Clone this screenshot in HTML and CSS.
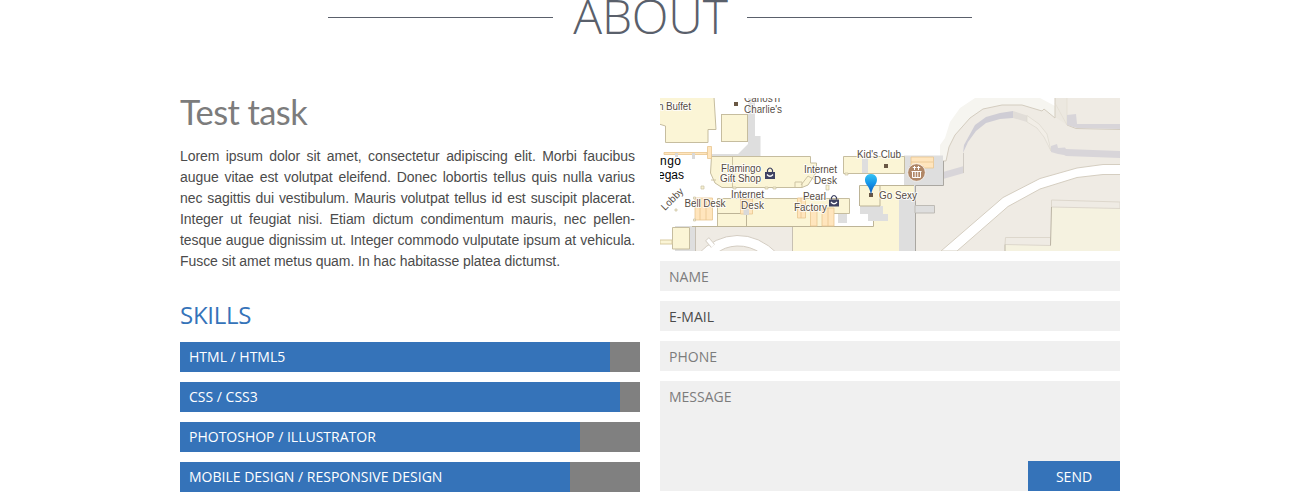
FILE: index.html
```html
<!DOCTYPE html>
<html lang="en">
<head>
<meta charset="utf-8">
<title>About</title>
<link rel="stylesheet" href="styles.css">
</head>
<body>
<section class="about">
  <header class="about-head"><span class="rule"></span><h1 class="title">ABOUT</h1><span class="rule"></span></header>
  <div class="columns">
    <div class="col">
      <h2 class="task">Test task</h2>
      <p class="copy">Lorem ipsum dolor sit amet, consectetur adipiscing elit. Morbi faucibus augue vitae est volutpat eleifend. Donec lobortis tellus quis nulla varius nec sagittis dui vestibulum. Mauris volutpat tellus id est suscipit placerat. Integer ut feugiat nisi. Etiam dictum condimentum mauris, nec pellen&shy;tesque augue dignissim ut. Integer commodo vulputate ipsum at vehicula. Fusce sit amet metus quam. In hac habitasse platea dictumst.</p>
      <h3 class="skills-title">SKILLS</h3>
      <ul class="skills">
        <li class="skill"><div class="fill" style="width:430px">HTML / HTML5</div></li>
        <li class="skill"><div class="fill" style="width:440px">CSS / CSS3</div></li>
        <li class="skill"><div class="fill" style="width:400px">PHOTOSHOP / ILLUSTRATOR</div></li>
        <li class="skill"><div class="fill" style="width:390px">MOBILE DESIGN / RESPONSIVE DESIGN</div></li>
      </ul>
    </div>
    <div class="col">
      <svg class="map" viewBox="660 98 460 153" width="460" height="153">
        <defs><linearGradient id="pin" x1="0" y1="0" x2="0" y2="1"><stop offset="0" stop-color="#35c3f4"/><stop offset=".45" stop-color="#1495e8"/><stop offset="1" stop-color="#0c50b8"/></linearGradient></defs>
        <rect x="660" y="98" width="460" height="153" fill="#fff"/>
        <!-- east grounds -->
        <path d="M940 160V145L945 138 950 122 960 108 975 98H1040L1055 106 1067 125 1055 130 943 165Z" fill="#f6f5f0"/>
        <path d="M915 185H943V160H946L949 147 955 135 970 118 983 109 1002 105H1022L1042 111 1044 109 1055 118V98H1120V251H915Z" fill="#efebe4"/>
        <path d="M1055 98H1067V125L1055 117Z" fill="#ece8e0"/>
        <path d="M943 161H946L949 147 955 135 970 118 983 109 1002 105H1022L1042 111 1044 109 1055 118V98M1067 125L1076 128.500 1120 129.500" fill="none" stroke="#d4cdc0"/>
        <path d="M1055 103L1067 125V98" fill="none" stroke="#e0dacf" stroke-width=".6"/>
        <path d="M963 153L964 145 975 125 986 117 1000 113 1013 111V118L1000 119 986 123 976 131 968 142Z" fill="#cfcdd5"/>
        <path d="M1013 111L1027 115.500V122L1013 118Z" fill="#e1ddd8"/>
        <path d="M1027 115.500L1039 124 1047 134 1051 151 1044 137 1037 128 1027 122Z" fill="#f2eee7" stroke="#dcd8cf" stroke-width=".7"/>
        <path d="M943 172L964 166V173L943 179ZM1067 115L1076 114 1077 124 1120 124V129L1077 128 1067 125ZM1051 146L1057 144 1058 148 1065 147.500 1066 149 1120 151V158L1066 156 1064 155 1058 154 1051 152Z" fill="#d8d5d9"/>
        <path d="M943 185V162M963.500 153V173" stroke="#d0cbc4" fill="none"/>
        <path d="M941 251L1003 197.500 1040 178.500 1077 168 1103 164.500H1121V174.500H1103L1077 177.500 1040 189 1008 206.500 957 251Z" fill="#fff" stroke="#d5cec1"/>
        <path d="M1051.500 207L1120 208.500V252H1005V244.500L1050.500 245.500Z" fill="#f5f2e0"/>
        <path d="M1051.500 200L1120 202V208.500L1051.500 207ZM1005.500 237.500H1050.500V245.500L1005 244.500Z" fill="#efebe4" stroke="#ddd7cc"/>
        <path d="M1051.500 207L1050.500 245.500M1005 244.500V251" stroke="#bcb5a5"/>
        <!-- walkways -->
        <path d="M748 98H755V136H760.500V157H710V154H738L748 144Z" fill="#dedede"/>
        <path d="M904 155.500H943V185H915V251H899V185H904Z" fill="#dedede"/>
        <path d="M915 205.500H934.500V213H915Z" fill="#dedede" stroke="#bebbb5"/>
        <path d="M943.500 161V185.500H915.500V205M915.500 213V251" fill="none" stroke="#aaa7a1"/>
        <path d="M675 226H696V251H675Z" fill="#dedede"/>
        <!-- buildings -->
        <g fill="#fbf5d6" stroke="#c6bd9f">
          <path d="M659 97H714L716 129.500H708V142.500H665.500V126L659 124Z"/>
          <rect x="721.500" y="114.500" width="26" height="27"/>
          <path d="M711.500 156.500H810.500V163H816.500V172L808 185 802 187.500H722L715 183 710.500 173Z"/>
          <path d="M717.500 198.500H849.500V213.500H834V226.500H717.500Z"/>
          <path d="M843.500 156.500H904.500V173.500H843.500Z"/>
          <path d="M672.500 227.500H689.500V249H672.500Z"/>
        </g>
        <path d="M792 226.500H873.500V206L860 206V185.500H914V196H899V251H792Z" fill="#fbf5d6"/>
        <path d="M834 214H873.500V226H834Z" fill="#fff"/>
        <path d="M860 206H883V214H888V221H868V214H860ZM838 214H847V223H838Z" fill="#dedede"/>
        <path d="M692 226.500H873.500V221M859.500 206V185.500H914M880 186V206H860M717.500 213.500H746V198.500M746.500 213V226" fill="none" stroke="#bdb497"/>
        <path d="M732.500 157V187M711 180H716M802 187V182H795V187M801 185L808 176 815 180" fill="none" stroke="#cdc3a3"/>
        <path d="M862 157H868V173H862Z" fill="#dedede"/>
        <path d="M660 240H672V244H660Z" fill="#fbf5d6" stroke="#d8cba1"/>
        <path d="M695.500 227H792V251H695.500Z" fill="#efebe4"/>
        <path d="M695.500 251V227M792.500 227V251" stroke="#c7c0b3"/>
        <path d="M698 254Q715 236 737 235.500T778 254H762Q750 245.500 737 246T716 254Z" fill="#fff" stroke="#d4cdc2"/>
        <path d="M707 239L713 246" stroke="#d4cdc2" stroke-width="5"/>
        <path d="M707.500 239.500L713 246" stroke="#fff" stroke-width="3.500"/>
        <g fill="#ffe5bd" stroke="#e8c58f" stroke-width=".8">
          <path d="M664 152.500H707V154.500H664ZM707.500 146.500H711.500V158.500H707.500ZM695 198H712.500V220H695ZM740.500 199H752.500V214H740.500ZM797.500 198H805.500V218H797.500ZM810.500 208H817V226H810.500ZM822 208H834V226H822ZM911 157H933.500V168H911Z"/>
          <path d="M700 198V220M706 198V220M740 206H752M801 198V218M828 208V226M911 162H933" fill="none"/>
        </g>
        <path d="M743.500 209H749V215H743.500ZM675 153H678V157H675ZM692 153H695V159H692Z" fill="#d9d9d9"/>
        <g fill="#f8f1d2" stroke="#c9c0a5" stroke-width=".7"><path d="M701 186H704V189H701ZM675 209H677V211H675ZM733 187H736V189H733ZM765 187H768V189H765ZM773 187H776V189H773ZM826 185H829V190H826ZM845 173H848V175H845ZM693.500 197H695.500V199H693.500ZM693.500 219H695.500V221H693.500Z"/></g>
        <!-- place names -->
        <g class="place">
          <text x="658" y="110" textLength="33">n Buffet</text>
          <text x="744" y="102" textLength="36">Carlos'n</text>
          <text x="744" y="113" textLength="38">Charlie's</text>
          <text x="721" y="172" textLength="40">Flamingo</text>
          <text x="720" y="182" textLength="41">Gift Shop</text>
          <text x="804" y="173" textLength="33">Internet</text>
          <text x="814" y="184" textLength="23">Desk</text>
          <text x="731" y="198" textLength="33">Internet</text>
          <text x="741" y="209" textLength="23">Desk</text>
          <text x="684.500" y="207" textLength="41">Bell Desk</text>
          <text x="803" y="200" textLength="23">Pearl</text>
          <text x="794" y="211" textLength="33">Factory</text>
          <text x="857" y="157.500" textLength="44">Kid's Club</text>
          <text x="879" y="199" textLength="38">Go Sexy</text>
          <text transform="translate(665 211) rotate(-45)" textLength="27">Lobby</text>
        </g>
        <g class="city"><text x="660" y="165" textLength="21">ngo</text><text x="658" y="178.500" textLength="26">egas</text></g>
        <path d="M734 102H738V106H734ZM884 164H888V168H884ZM869 193H873V197H869Z" fill="#695744"/>
        <g>
          <path d="M765 172H775V179H765ZM829 199.500H839V206.500H829Z" fill="#3e4262"/>
          <path d="M767.500 172V170Q770 166 772.500 170V172M831.500 199.500V197.500Q834 193.500 836.500 197.500V199.500" fill="none" stroke="#3e4262" stroke-width="1.200"/>
          <path d="M767 174.500Q770 178 773 174.500M831 202Q834 205.500 837 202" fill="none" stroke="#fff" stroke-width="1.300"/>
        </g>
        <circle cx="916.500" cy="172.500" r="8.800" fill="#b08767" stroke="#fff" stroke-width=".7"/>
        <path d="M911.500 171.500H921.500M912.500 171.500V177.500H920.500V171.500M915.200 172V177M917.800 172V177M914.500 166V170M918.500 166V170M912.800 167.500H916.200M916.900 167.500H920.200" fill="none" stroke="#fff"/>
        <path d="M871 195Q870 188.500 866.500 184.500C863.500 180 865 174 871 174S878.500 180 875.500 184.500Q872 188.500 871 195Z" fill="url(#pin)"/>
      </svg>
      <form class="form">
        <div class="field">NAME</div>
        <div class="field active">E-MAIL</div>
        <div class="field">PHONE</div>
        <div class="field message"><span>MESSAGE</span><button class="send" type="button">SEND</button></div>
      </form>
    </div>
  </div>
</section>
</body>
</html>
```
FILE: styles.css
```css
* { box-sizing: border-box; }
body { margin: 0; background: #fff; overflow: hidden; }
h1, h2, h3, p, ul { margin: 0; padding: 0; font-weight: 400; }
.about { width: 940px; height: 492px; margin: 0 auto; font-family: "Open Sans", sans-serif; }
.about-head { display: flex; justify-content: center; height: 98px; }
.rule { width: 225px; height: 1px; margin-top: 17px; background: #5a606b; }
.title { width: 194px; height: 64px; margin-top: -16px; padding-left: 1px; line-height: 64px; font-size: 48px; font-weight: 300; letter-spacing: -.2px; text-align: center; color: #5a606b; }
.columns { display: grid; grid-template-columns: 460px 460px; gap: 20px; }
.task { height: 48px; line-height: 27px; font-family: Lato, sans-serif; font-size: 34.500px; letter-spacing: -.6px; color: #7c7c7c; white-space: nowrap; }
.copy { width: 455px; height: 126px; font: 14px/21px "Liberation Sans", Arial, sans-serif; letter-spacing: -.06px; color: #4b4b4b; text-align: justify; hyphens: manual; }
.skills-title { margin-top: 27px; height: 43px; line-height: 31px; font-size: 24px; letter-spacing: -.25px; color: #3573b9; }
.skills { display: flex; flex-direction: column; gap: 10px; list-style: none; }
.skill { height: 30px; background: #808080; }
.fill { height: 30px; padding-left: 9px; line-height: 30px; font-size: 14px; color: #fff; background: #3573b9; }
.map { display: block; }
.place { font: 10px "Liberation Sans", Arial, sans-serif; fill: #554b43; stroke: #fff; stroke-width: 2px; stroke-opacity: .8; paint-order: stroke; stroke-linejoin: round; }
.city { font: 12px "Liberation Sans", Arial, sans-serif; fill: #000; }
.form { display: flex; flex-direction: column; gap: 10px; margin-top: 10px; }
.field { height: 30px; padding-left: 9px; line-height: 31px; font-size: 14px; color: #7c7c7c; background: #f0f0f0; }
.active { color: #4b4b4b; }
.message { display: flex; justify-content: space-between; height: 110px; }
.send { align-self: flex-end; width: 92px; height: 30px; padding: 0; border: 0; background: #3573b9; color: #fff; font: 14px/31px "Open Sans", sans-serif; }
```
